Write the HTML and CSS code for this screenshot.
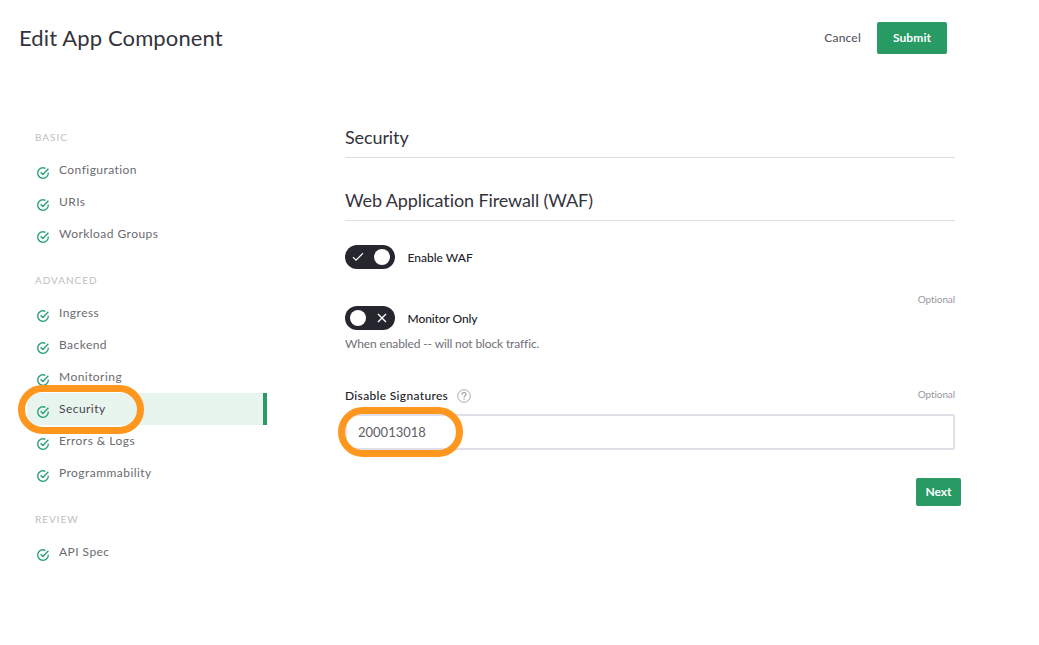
FILE: index.html
```
<!DOCTYPE html>
<html lang="en">
<head>
<meta charset="utf-8">
<title>Edit App Component</title>
<link rel="stylesheet" href="styles.css">
</head>
<body>
<svg width="0" height="0" class="defs">
  <symbol id="check" viewBox="0 0 14 14">
    <path d="M12.3 6.6A5.3 5.3 0 1 1 9.4 2.3M4.6 6.3L6.9 8.4L12.4 2.7" fill="none" stroke="#2ba178" stroke-width="1.4"/>
  </symbol>
</svg>
<header class="header">
  <h1 class="title"><span>Edit App Component</span></h1>
  <button class="cancel">Cancel</button>
  <button class="btn submit">Submit</button>
</header>
<div class="layout">
  <nav class="nav">
    <h2 class="group">BASIC</h2>
    <ul class="list">
      <li class="item"><svg class="icon"><use href="#check"/></svg><span>Configuration</span></li>
      <li class="item"><svg class="icon"><use href="#check"/></svg><span>URIs</span></li>
      <li class="item"><svg class="icon"><use href="#check"/></svg><span>Workload Groups</span></li>
    </ul>
    <h2 class="group">ADVANCED</h2>
    <ul class="list">
      <li class="item"><svg class="icon"><use href="#check"/></svg><span>Ingress</span></li>
      <li class="item"><svg class="icon"><use href="#check"/></svg><span>Backend</span></li>
      <li class="item"><svg class="icon"><use href="#check"/></svg><span>Monitoring</span></li>
      <li class="item active"><svg class="icon"><use href="#check"/></svg><span>Security</span><i class="ring ring-nav"></i></li>
      <li class="item"><svg class="icon"><use href="#check"/></svg><span>Errors &amp; Logs</span></li>
      <li class="item"><svg class="icon"><use href="#check"/></svg><span>Programmability</span></li>
    </ul>
    <h2 class="group">REVIEW</h2>
    <ul class="list">
      <li class="item"><svg class="icon"><use href="#check"/></svg><span>API Spec</span></li>
    </ul>
  </nav>
  <main class="main">
    <h2 class="section">Security</h2>
    <h3 class="section waf">Web Application Firewall (WAF)</h3>
    <div class="row">
      <span class="toggle"><svg width="12" height="10" viewBox="0 0 12 10"><path d="M1 5.2L4 8.2L11 1.2" fill="none" stroke="#fff" stroke-width="1.2"/></svg><i class="knob"></i></span>
      <span class="label enable">Enable WAF</span>
    </div>
    <div class="optional">Optional</div>
    <div class="row">
      <span class="toggle"><i class="knob"></i><svg class="cross" width="10" height="10" viewBox="0 0 10 10"><path d="M1 1L9 9M9 1L1 9" fill="none" stroke="#fff" stroke-width="1.4"/></svg></span>
      <span class="label monitor">Monitor Only</span>
    </div>
    <p class="help">When enabled -- will not block traffic.</p>
    <div class="field-head">
      <span class="label signatures">Disable Signatures</span>
      <svg class="info" width="14" height="14" viewBox="0 0 14 14"><circle cx="7" cy="7" r="6.3" fill="none" stroke="#aaaab4"/><path d="M5 5.7C5 2.8 9 2.9 9 5.4C9 6.9 7.1 6.8 7.1 8.4M7.1 9.5V10.7" fill="none" stroke="#9999a4" stroke-width="1.1"/></svg>
      <span class="optional end">Optional</span>
    </div>
    <div class="field"><input class="input" value="200013018"><i class="ring ring-field"></i></div>
    <button class="btn next">Next</button>
  </main>
</div>
</body>
</html>
```
FILE: styles.css
```
* { box-sizing: border-box; }
body { margin: 0; background: #fff; color: #33333b; font-family: Lato, "Open Sans", sans-serif; }
h1, h2, h3, p, ul { margin: 0; padding: 0; font-weight: 400; }
button { border: 0; padding: 0; font-family: inherit; }
.defs { display: block; }
.header { display: flex; align-items: center; width: 947px; height: 76px; padding-left: 19px; }
.title { flex: 1; font-size: 22px; line-height: 30px; letter-spacing: .13px; padding-bottom: 1px; }
.cancel { background: none; color: #55555e; font-size: 12px; font-weight: 500; letter-spacing: .2px; margin-right: 16px; padding-bottom: 2px; }
.btn { background: #289b65; color: #fff; font-size: 12px; font-weight: 700; border-radius: 2px; padding-bottom: 2px; }
.submit { width: 70px; height: 32px; letter-spacing: .1px; }
.layout { display: flex; align-items: flex-start; gap: 78px; padding-left: 27px; }
.nav { width: 240px; padding-top: 54px; }
.group { height: 15px; padding-left: 8px; font-size: 10px; line-height: 15px; letter-spacing: .95px; color: #bebec2; }
.list { list-style: none; padding: 9px 0 23px; }
.item { position: relative; display: flex; height: 32px; padding-left: 9px; font-size: 12px; line-height: 32px; letter-spacing: .45px; color: #6b6b70; }
.icon { width: 14px; height: 14px; margin: 12px 9px 0 0; }
.active { background: #e8f5ee; border-right: 4px solid #289b65; color: #45454a; }
.ring { position: absolute; border: 7px solid #ff961e; pointer-events: none; }
.ring-nav { left: -9px; top: -8px; width: 126px; height: 49px; border-radius: 25px; z-index: 1; }
.main { width: 616px; padding-top: 48px; }
.section { width: 610px; height: 34px; border-bottom: 1px solid #dedee2; font-size: 18px; line-height: 27px; letter-spacing: -.11px; }
.waf { margin-top: 29px; }
.row { display: flex; align-items: center; height: 24px; gap: 12.5px; }
.waf + .row { margin-top: 24px; }
.toggle { display: flex; align-items: center; justify-content: space-between; width: 50px; height: 24px; padding: 0 5px 0 7px; border-radius: 12px; background: #26262f; }
.knob { width: 16px; height: 16px; border-radius: 50%; background: #fff; }
.toggle .knob:first-child { margin-left: -2px; }
.cross { margin-right: 3px; }
.label { font-size: 12px; font-weight: 500; color: #222229; line-height: 16px; }
.row .label { padding-top: 2px; }
.monitor { letter-spacing: -.1px; }
.signatures { letter-spacing: .33px; }
.optional { width: 610px; height: 14px; margin: 23px 0 0; text-align: right; font-size: 10px; line-height: 14px; letter-spacing: -.1px; color: #98989d; }
.help { height: 16px; margin-top: 6px; font-size: 12px; line-height: 16px; letter-spacing: -.12px; color: #707077; }
.field-head { display: flex; align-items: center; width: 610px; height: 16px; margin-top: 36px; }
.info { margin-left: 9px; }
.end { width: auto; margin: -4px 0 0 auto; }
.field { position: relative; width: 610px; height: 36px; margin-top: 10px; }
.input { display: block; width: 100%; height: 100%; padding: 0 11px; border: 2px solid #e0e0e9; border-radius: 2px; font: 13px Lato, sans-serif; color: #606066; outline: 0; }
.ring-field { left: -7px; top: -7px; width: 125px; height: 50px; border-radius: 25px; }
.next { display: block; width: 45px; height: 28px; margin: 28px 0 0 auto; }
```
